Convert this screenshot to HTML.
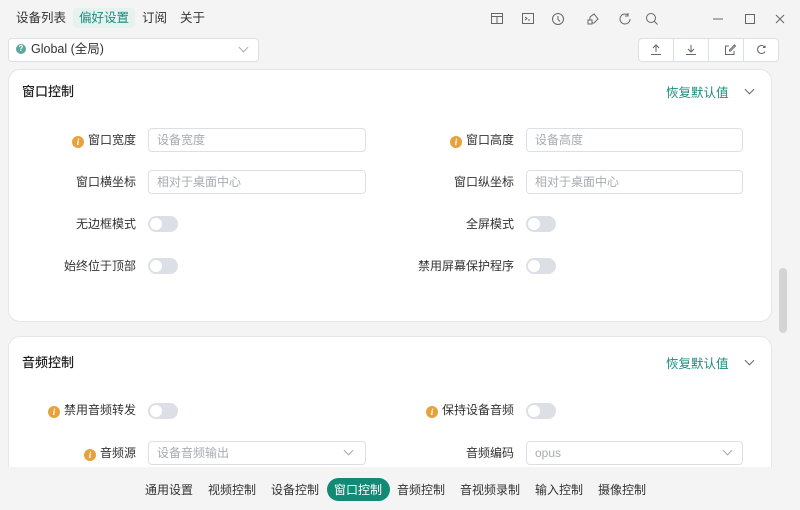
<!DOCTYPE html>
<html><head><meta charset="utf-8">
<style>
*{box-sizing:border-box;margin:0;padding:0}
html,body{width:800px;height:510px;overflow:hidden}
body{background:#f4f4f4;font-family:"Liberation Sans","Noto Sans CJK SC",sans-serif;font-size:12px;color:#333;position:relative}
.abs{position:absolute}
.nav span{position:absolute;top:9px;font-size:12.5px;color:#333;line-height:18px}
.card{position:absolute;left:8px;width:764px;background:#fff;border:1px solid #e4e6ea;border-radius:12px}
.lbl{position:absolute;font-size:12px;color:#333;text-align:right;line-height:16px;white-space:nowrap}
.inp{position:absolute;height:24px;border:1px solid #dcdfe6;border-radius:4px;background:#fff;font-size:12px;color:#a8abb2;padding-left:8px;line-height:22px}
.tg{position:absolute;width:30px;height:16px;border-radius:8px;background:#dcdfe6}
.tg:after{content:"";position:absolute;left:2px;top:2px;width:12px;height:12px;border-radius:6px;background:#fff}
.info{display:inline-block;width:12px;height:12px;border-radius:6px;background:#e6a23c;color:#fff;font-size:9px;font-weight:bold;font-style:italic;text-align:center;line-height:12px;margin-right:4px;vertical-align:-2px;font-family:"Liberation Serif",serif;position:relative;top:-1px}
.ttl{position:absolute;font-size:13px;color:#222;font-weight:500}
.rst{position:absolute;font-size:12.5px;color:#198c7c}
.chev{position:absolute;width:7px;height:7px;border-right:1.2px solid #666;border-bottom:1.2px solid #666;transform:rotate(45deg)}
.bt span{position:absolute;top:482px;font-size:12px;color:#333;line-height:16px}
svg{position:absolute}
</style></head><body>
<div class="nav">
<span style="left:16px">设备列表</span>
<div class="abs" style="left:73px;top:8px;width:62px;height:20px;background:#e6f2ef;border-radius:4px"></div>
<span style="left:79px;color:#198c7c">偏好设置</span>
<span style="left:142px">订阅</span>
<span style="left:180px">关于</span>
</div>
<svg style="left:488px;top:11px" width="180" height="16" fill="none" stroke="#666" stroke-width="1">
<rect x="3.5" y="2.5" width="11" height="10"/><line x1="3.5" y1="5.5" x2="14.5" y2="5.5"/><line x1="9" y1="5.5" x2="9" y2="12.5"/>
<rect x="34.5" y="2.5" width="11" height="10"/><path d="M37 6l2 1.5-2 1.5M40 9h2"/>
<circle cx="70" cy="8" r="5.5"/><path d="M70 5v3.5l2 2"/>
<path d="M100 13v-4h4v4zM102 9V6l4-3 4 5-4 4h-2"/>
<path d="M140 4a5 5 0 1 0 2 4M140 2v3h-3"/>
<circle cx="163" cy="7" r="4.5"/><path d="M166 10l3.5 3.5"/>
</svg>
<svg style="left:708px;top:10px" width="90" height="18" fill="none" stroke="#666" stroke-width="1">
<line x1="5" y1="9" x2="15" y2="9"/><rect x="37.5" y="4.5" width="9" height="9"/><path d="M68 5l8 8M76 5l-8 8"/>
</svg>
<div class="abs" style="left:8px;top:38px;width:251px;height:24px;background:#fff;border:1px solid #dcdfe6;border-radius:4px"></div>
<div class="abs" style="left:16px;top:44px;width:10px;height:10px;border-radius:5px;background:#5aa89b;color:#fff;font-size:8px;text-align:center;line-height:10px;font-weight:bold">?</div>
<div class="abs" style="left:31px;top:40px;font-size:12.5px;color:#333;line-height:18px">Global (全局)</div>
<div class="chev" style="left:240px;top:44px;border-color:#aaa"></div>
<div class="abs" style="left:638px;top:38px;width:141px;height:24px;background:#fff;border:1px solid #dcdfe6;border-radius:4px"></div>
<div class="abs" style="left:673px;top:38px;width:1px;height:24px;background:#dcdfe6"></div>
<div class="abs" style="left:708px;top:38px;width:1px;height:24px;background:#dcdfe6"></div>
<div class="abs" style="left:743px;top:38px;width:1px;height:24px;background:#dcdfe6"></div>
<svg style="left:638px;top:38px" width="141" height="24" fill="none" stroke="#666" stroke-width="1">
<path d="M13 16.5h10M18 14V7M15 10l3-3 3 3"/>
<path d="M48 16.5h10M53 7v7M50 11l3 3 3-3"/>
<path d="M91 8h-3.5v8.5h8.5V13M92.5 13l5-5-1-1-5 5v1z"/>
<path d="M127 9.5a4 4 0 1 0 0 4M127 7.5v2h-2"/>
</svg>
<div class="card" style="top:69px;height:253px"></div>
<div class="ttl" style="left:22px;top:81px">窗口控制</div>
<div class="rst" style="left:666px;top:82px">恢复默认值</div>
<div class="chev" style="left:746px;top:86px"></div>
<div class="lbl" style="right:664px;top:132px"><span class="info">i</span>窗口宽度</div>
<div class="inp" style="left:148px;top:128px;width:218px">设备宽度</div>
<div class="lbl" style="right:286px;top:132px"><span class="info">i</span>窗口高度</div>
<div class="inp" style="left:526px;top:128px;width:217px">设备高度</div>
<div class="lbl" style="right:664px;top:174px">窗口横坐标</div>
<div class="inp" style="left:148px;top:170px;width:218px">相对于桌面中心</div>
<div class="lbl" style="right:286px;top:174px">窗口纵坐标</div>
<div class="inp" style="left:526px;top:170px;width:217px">相对于桌面中心</div>
<div class="lbl" style="right:664px;top:216px">无边框模式</div>
<div class="tg" style="left:148px;top:216px"></div>
<div class="lbl" style="right:286px;top:216px">全屏模式</div>
<div class="tg" style="left:526px;top:216px"></div>
<div class="lbl" style="right:664px;top:258px">始终位于顶部</div>
<div class="tg" style="left:148px;top:258px"></div>
<div class="lbl" style="right:286px;top:258px">禁用屏幕保护程序</div>
<div class="tg" style="left:526px;top:258px"></div>
<div class="card" style="top:336px;height:160px"></div>
<div class="ttl" style="left:22px;top:352px">音频控制</div>
<div class="rst" style="left:666px;top:353px">恢复默认值</div>
<div class="chev" style="left:746px;top:357px"></div>
<div class="lbl" style="right:664px;top:402px"><span class="info">i</span>禁用音频转发</div>
<div class="tg" style="left:148px;top:403px"></div>
<div class="lbl" style="right:286px;top:402px"><span class="info">i</span>保持设备音频</div>
<div class="tg" style="left:526px;top:403px"></div>
<div class="lbl" style="right:664px;top:445px"><span class="info">i</span>音频源</div>
<div class="inp" style="left:148px;top:441px;width:218px">设备音频输出</div>
<div class="chev" style="left:345px;top:447px;border-color:#aaa"></div>
<div class="lbl" style="right:286px;top:445px">音频编码</div>
<div class="inp" style="left:526px;top:441px;width:217px">opus</div>
<div class="chev" style="left:724px;top:447px;border-color:#aaa"></div>
<div class="abs" style="left:779px;top:268px;width:8px;height:65px;border-radius:4px;background:#d4d4d4"></div>
<div class="abs" style="left:0;top:467px;width:800px;height:43px;background:#f4f4f4"></div>
<div class="abs" style="left:327px;top:478px;width:63px;height:23px;border-radius:12px;background:#128a75"></div>
<div class="bt">
<span style="left:145px">通用设置</span>
<span style="left:208px">视频控制</span>
<span style="left:271px">设备控制</span>
<span style="left:334px;color:#fff">窗口控制</span>
<span style="left:397px">音频控制</span>
<span style="left:460px">音视频录制</span>
<span style="left:535px">输入控制</span>
<span style="left:598px">摄像控制</span>
</div>
</body></html>
